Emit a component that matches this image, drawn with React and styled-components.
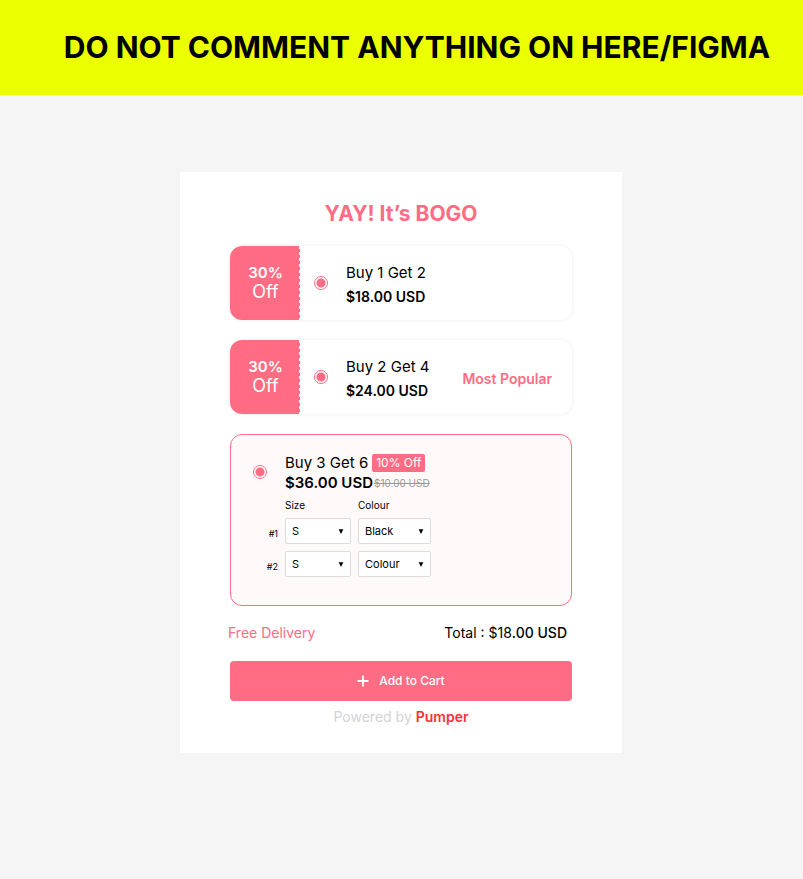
import React, { useId } from "react";
import styled, { createGlobalStyle } from "styled-components";

const PINK = "#ff6c84";

const GlobalStyle = createGlobalStyle`
  *, *::before, *::after { box-sizing: border-box; }
  body {
    margin: 0;
    background: #f5f5f5;
    color: #000;
    font-family: Inter, "Liberation Sans", sans-serif;
    font-size: 14px;
  }
`;

const Banner = styled.header`
  display: flex;
  align-items: center;
  justify-content: center;
  min-height: 95px;
  padding: 0 0 2px 31px;
  background: #ebff00;
  font-size: 30px;
  line-height: 38px;
  font-weight: 700;
  white-space: nowrap;
`;

const Page = styled.main`
  display: flex;
  justify-content: center;
  padding: 77px 25px 77px 24px;
`;

const Card = styled.form`
  flex: 0 1 442px;
  padding: 28px 50px 26px;
  background: #fff;
`;

const Title = styled.h1`
  margin: 0 0 18px;
  color: ${PINK};
  font-size: 21px;
  line-height: 28px;
  font-weight: 700;
  text-align: center;
`;

const Offers = styled.div`
  display: flex;
  flex-direction: column;
  gap: 20px;
`;

const Offer = styled.section`
  display: flex;
  align-items: center;
  min-height: 74px;
  padding-right: 20px;
  border-radius: 12px;
  background: #fff;
  box-shadow: 0 0 4px rgba(0, 0, 0, 0.08);
  overflow: hidden;
`;

const Discount = styled.div`
  display: flex;
  flex-direction: column;
  justify-content: center;
  align-self: stretch;
  flex: 0 0 70px;
  padding: 0 0 2px 1px;
  background:
    repeating-linear-gradient(#fff 0 3px, ${PINK} 3px 6px) right / 1px 100% no-repeat,
    ${PINK};
  color: #fff;
  text-align: center;
`;

const Percent = styled.span`
  font-size: 15px;
  line-height: 19px;
  font-weight: 600;
`;

const Off = styled.span`
  font-size: 18px;
  line-height: 20px;
`;

const Radio = styled.input.attrs({ type: "radio" })`
  appearance: none;
  flex: none;
  width: 14px;
  height: 14px;
  margin: 0;
  border: 1px solid ${PINK};
  border-radius: 50%;
  background: #fff;
  &:checked {
    background: radial-gradient(circle, ${PINK} 4px, #fff 5px);
  }
`;

const OfferBody = styled.div`
  display: flex;
  flex: 1;
  align-items: center;
  gap: 18px;
  padding-left: 14px;
`;

const OfferLabel = styled.label`
  display: flex;
  flex-direction: column;
  padding-top: 3px;
  line-height: 24px;
`;

const Name = styled.span`
  font-size: 15px;
`;

const Price = styled.strong`
  font-size: ${(p) => (p.$large ? 15 : 14)}px;
  font-weight: 600;
`;

const Tag = styled.span`
  padding-top: 3px;
  color: ${PINK};
  font-weight: 600;
`;

const SelectedOffer = styled.section`
  display: grid;
  grid-template-columns: 14px 1fr;
  column-gap: 18px;
  min-height: 172px;
  padding: 18px 22px 28px;
  border: 1px solid ${PINK};
  border-radius: 12px;
  background: #fff9f9;
`;

const RadioCell = styled.div`
  padding-top: 12px;
`;

const Heading = styled.div`
  display: flex;
  align-items: center;
  gap: 4px;
  line-height: 20px;
`;

const PriceRow = styled.div`
  display: flex;
  align-items: center;
  gap: 1px;
  line-height: 20px;
`;

const Badge = styled.span`
  padding: 0 4px;
  border-radius: 2px;
  background: ${PINK};
  color: #fff;
  font-size: 12px;
  line-height: 18px;
`;

const OldPrice = styled.s`
  color: #999;
  font-size: 10px;
`;

const Variants = styled.div`
  display: grid;
  grid-template-columns: 12px 66px 73px;
  column-gap: 7px;
  row-gap: 7px;
  align-items: center;
  margin-left: -19px;
`;

const ColumnName = styled.span`
  grid-column: ${(p) => p.$column};
  font-size: 10px;
  line-height: 12px;
  padding-top: 6px;
`;

const RowNumber = styled.span`
  padding-top: 6px;
  font-size: 9px;
  line-height: 12px;
  justify-self: end;
`;

const SelectBox = styled.div`
  display: grid;
  align-items: center;
  > * { grid-area: 1 / 1; }
  svg {
    justify-self: end;
    margin-right: 7px;
    pointer-events: none;
  }
`;

const Select = styled.select`
  appearance: none;
  width: 100%;
  height: 26px;
  padding: 0 16px 0 6px;
  border: 1px solid #dcdcdc;
  border-radius: 2px;
  background: #fff;
  color: #000;
  font: 11px/16px Inter, sans-serif;
`;

const Summary = styled.div`
  display: flex;
  justify-content: space-between;
  margin: 17px 5px 18px -2px;
  line-height: 20px;
`;

const Delivery = styled.span`
  color: ${PINK};
`;

const Amount = styled.span`
  font-weight: 500;
`;

const CartButton = styled.button`
  display: flex;
  align-items: center;
  justify-content: center;
  gap: 10px;
  width: 100%;
  height: 40px;
  border: 0;
  border-radius: 4px;
  background: ${PINK};
  color: #fff;
  font: 500 12px/16px Inter, sans-serif;
`;

const Powered = styled.p`
  margin: 6px 0 0;
  color: #d4d4d4;
  line-height: 20px;
  text-align: center;
`;

const Brand = styled.strong`
  color: #ff3034;
  font-weight: 600;
`;

function Dropdown({ label, options }) {
  return (
    <SelectBox>
      <Select aria-label={label}>
        {options.map((o) => <option key={o}>{o}</option>)}
      </Select>
      <svg width="6" height="5" viewBox="0 0 6 5" aria-hidden="true">
        <path d="M0.6 0.3H5.4L3 4.9Z" fill="#000" />
      </svg>
    </SelectBox>
  );
}

function BundleOffer({ name, price, tag }) {
  const id = useId();
  return (
    <Offer>
      <Discount>
        <Percent>30%</Percent>
        <Off>Off</Off>
      </Discount>
      <OfferBody>
        <Radio id={id} defaultChecked />
        <OfferLabel htmlFor={id}>
          <Name>{name}</Name>
          <Price>{price}</Price>
        </OfferLabel>
      </OfferBody>
      {tag && <Tag>{tag}</Tag>}
    </Offer>
  );
}

export default function App() {
  return (
    <>
      <GlobalStyle />
      <Banner>DO NOT COMMENT ANYTHING ON HERE/FIGMA</Banner>
      <Page>
        <Card onSubmit={(e) => e.preventDefault()}>
          <Title>YAY! It’s BOGO</Title>
          <Offers>
            <BundleOffer name="Buy 1 Get 2" price="$18.00 USD" />
            <BundleOffer name="Buy 2 Get 4" price="$24.00 USD" tag="Most Popular" />
            <SelectedOffer>
              <RadioCell><Radio id="buy-3" defaultChecked /></RadioCell>
              <div>
                <Heading>
                  <Name as="label" htmlFor="buy-3">Buy 3 Get 6</Name>
                  <Badge>10% Off</Badge>
                </Heading>
                <PriceRow>
                  <Price $large>$36.00 USD</Price>
                  <OldPrice>$10.00 USD</OldPrice>
                </PriceRow>
                <Variants>
                  <ColumnName $column={2}>Size</ColumnName>
                  <ColumnName $column={3}>Colour</ColumnName>
                  <RowNumber>#1</RowNumber>
                  <Dropdown label="Size 1" options={["S", "M", "L"]} />
                  <Dropdown label="Colour 1" options={["Black", "White"]} />
                  <RowNumber>#2</RowNumber>
                  <Dropdown label="Size 2" options={["S", "M", "L"]} />
                  <Dropdown label="Colour 2" options={["Colour", "Black", "White"]} />
                </Variants>
              </div>
            </SelectedOffer>
          </Offers>
          <Summary>
            <Delivery>Free Delivery</Delivery>
            <span>Total : $18<Amount>.00 USD</Amount></span>
          </Summary>
          <CartButton type="submit">
            <svg width="12" height="12" viewBox="0 0 12 12" aria-hidden="true">
              <path d="M6 0.5V11.5M0.5 6H11.5" stroke="#fff" strokeWidth="1.8" />
            </svg>
            Add to Cart
          </CartButton>
          <Powered>Powered by <Brand>Pumper</Brand></Powered>
        </Card>
      </Page>
    </>
  );
}
